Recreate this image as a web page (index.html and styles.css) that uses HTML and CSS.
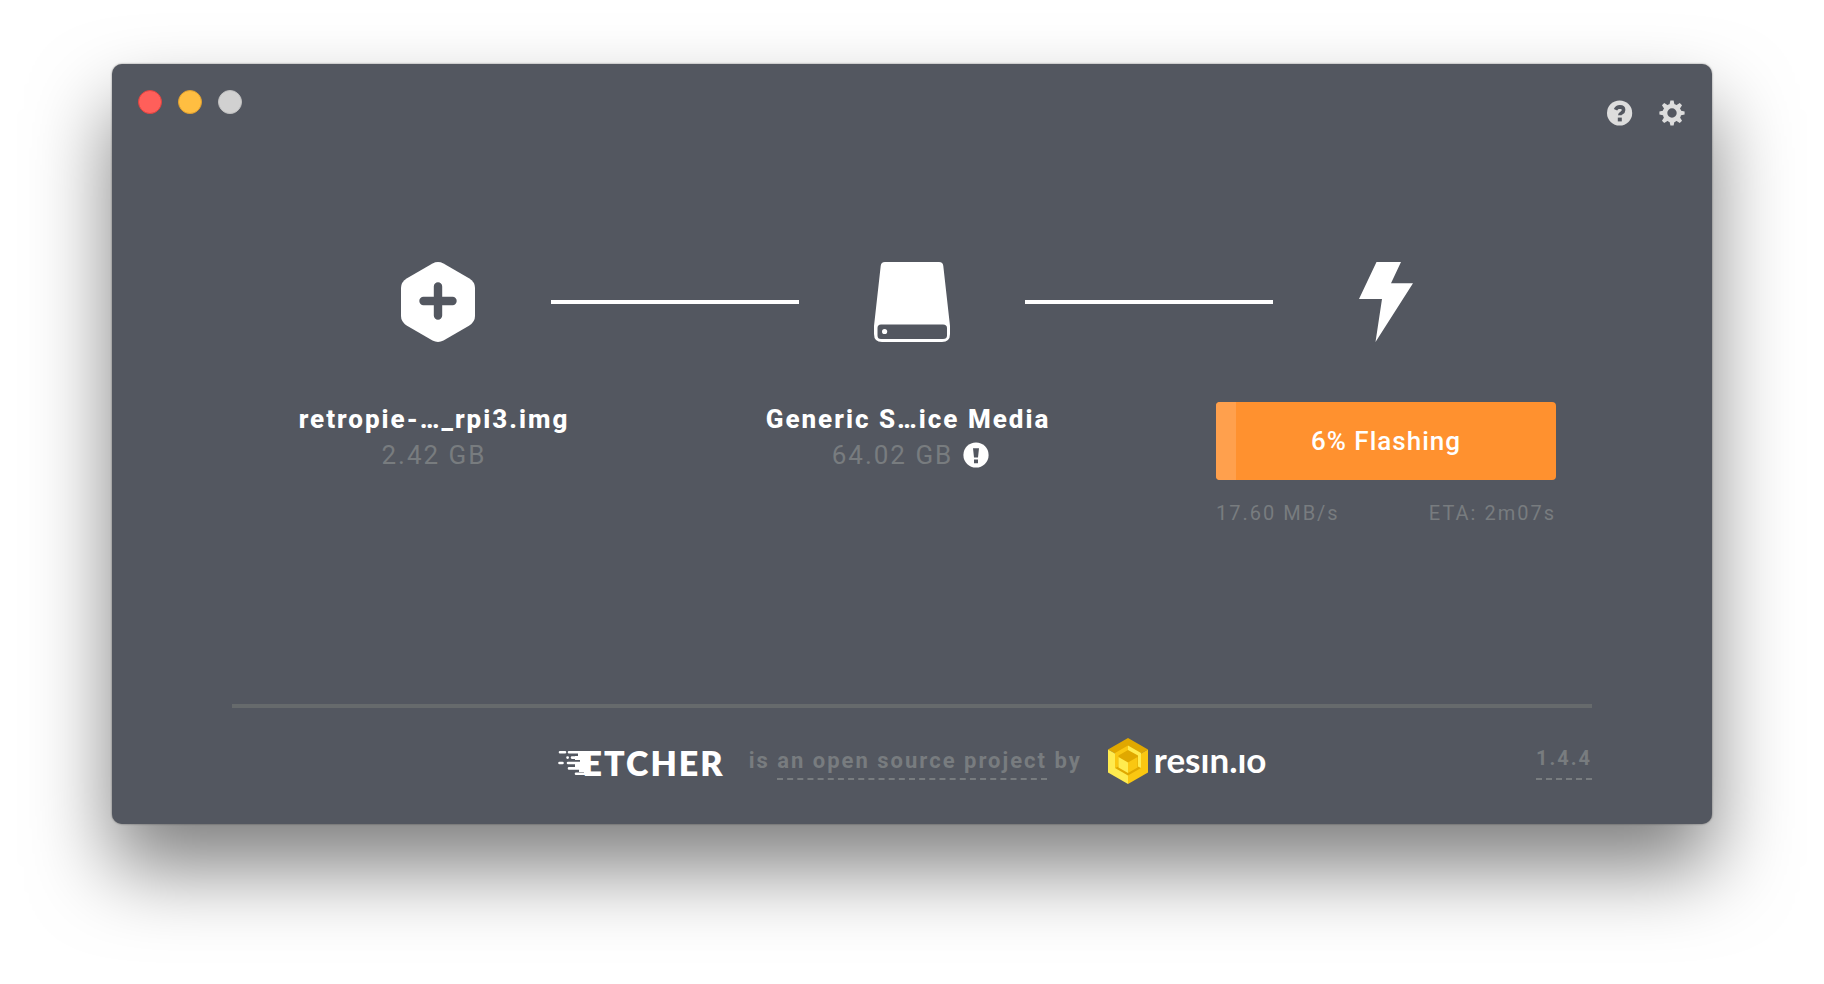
FILE: index.html
```
<!DOCTYPE html>
<html lang="en">
<head>
<meta charset="utf-8">
<title>Etcher</title>
<link rel="stylesheet" href="styles.css">
</head>
<body>
<div class="window">
  <header class="titlebar">
    <div class="lights">
      <button class="light light-close" aria-label="Close"></button>
      <button class="light light-minimize" aria-label="Minimize"></button>
      <button class="light light-zoom" aria-label="Zoom" disabled></button>
    </div>
    <nav class="tools">
      <button class="tool" aria-label="Help">
        <svg viewBox="0 0 26 26" width="26" height="26"><circle cx="12.600" cy="13" r="12.600" fill="#ddd"/><path d="M8.500 9.800Q9.800 6.900 12.800 6.900Q16.600 7 16.600 10Q16.600 11.800 14.500 13Q12.800 13.900 12.800 15.200" fill="none" stroke="#535760" stroke-width="3.600"/><path d="M10.800 17.600h4v3.800h-4z" fill="#535760"/></svg>
      </button>
      <button class="tool" aria-label="Settings">
        <svg viewBox="0 0 26 26" width="26" height="26"><g fill="#ddd"><path id="tooth" d="M10.400 5l1-4.600h3.200l1 4.600z"/><use href="#tooth" transform="rotate(45 13 13)"/><use href="#tooth" transform="rotate(90 13 13)"/><use href="#tooth" transform="rotate(135 13 13)"/><use href="#tooth" transform="rotate(180 13 13)"/><use href="#tooth" transform="rotate(225 13 13)"/><use href="#tooth" transform="rotate(270 13 13)"/><use href="#tooth" transform="rotate(315 13 13)"/></g><circle cx="13" cy="13" r="7" fill="none" stroke="#ddd" stroke-width="4.600"/></svg>
      </button>
    </nav>
  </header>

  <main class="main">
    <div class="track">
      <div class="track-icon">
        <svg viewBox="0 0 74 80" width="74" height="80"><path d="M31.5 1.5Q37-1.400 42.500 1.500L68 16.300Q74 20 74 26V54Q74 60 68 63.700L42.500 78.500Q37 81.400 31.500 78.500L6 63.700Q0 60 0 54V26Q0 20 6 16.300Z" fill="#fff"/><path d="M37 24.500v29M22.500 39h29" stroke="#535760" stroke-width="8.400" stroke-linecap="round"/></svg>
      </div>
      <div class="track-line"></div>
      <div class="track-icon">
        <svg viewBox="0 0 78 80" width="78" height="80"><path fill="#fff" fill-rule="evenodd" d="M12 0H66Q70 0 70.300 4L77 64V72Q77 80 69 80H9Q1 80 1 72V64L7.700 4Q8 0 12 0ZM8 62.500Q4.500 62.500 4.500 66V73.500Q4.500 77 8 77H70Q74 77 74 73.500V66Q74 62.500 70 62.500Z"/><circle cx="11.600" cy="69.500" r="2.600" fill="#fff"/></svg>
      </div>
      <div class="track-line"></div>
      <div class="track-icon">
        <svg viewBox="0 0 54 80" width="54" height="80"><path d="M17.500 0H42L32 21.300H54L16.500 80L23 37H0Z" fill="#fff"/></svg>
      </div>
    </div>

    <div class="steps">
      <section class="step step-text">
        <h2 class="step-name">retropie-…_rpi3.img</h2>
        <p class="step-size">2.42 GB</p>
      </section>
      <section class="step step-text">
        <h2 class="step-name">Generic S…ice Media</h2>
        <p class="step-size step-size-flagged">64.02 GB
          <svg class="alert" viewBox="0 0 26 26" width="26" height="26" role="img" aria-label="Warning"><circle cx="13" cy="13" r="12.600" fill="#fff"/><path d="M10 6.200h6l-1 9.200h-4zM11 17.400h4v3.800h-4z" fill="#535760"/></svg>
        </p>
      </section>
      <section class="step">
        <button class="flash"><span class="flash-bar" style="width:6%"></span><span class="flash-label">6% Flashing</span></button>
        <div class="stats"><span>17.60 MB/s</span><span>ETA: 2m07s</span></div>
      </section>
    </div>
  </main>

  <footer class="footer">
    <div class="credits">
      <a class="etcher" href="#" aria-label="Etcher"><svg class="streaks" viewBox="0 0 32 26" width="32" height="26"><g stroke="#fff" stroke-linecap="round" stroke-width="2.600"><path d="M2 2.300h5M11 2.300h19M9.500 7.600h.2M14 7.600h16M1.500 13h3M10 13h20M11 18.400h19M18 23.700h12"/></g><path d="M20 1h10v24H26v-3h-5v-5h-4v-3h5v-4h-5v-4h3z" fill="#fff"/></svg><span class="etcher-name">ETCHER</span></a>
      <span class="tagline">is <a class="underlined" href="#">an open source project</a> by</span>
      <a class="resin" href="#" aria-label="resin.io">
        <svg viewBox="0 0 40 46" width="40" height="46"><path d="M20 0L40 11.500L20 23L0 11.500Z" fill="#e0a800"/><path d="M0 11.500L20 23V46L0 34.500Z" fill="#ffeb4f"/><path d="M40 11.500L20 23V46L40 34.500Z" fill="#fac711"/><path d="M20 7.500L33 15V30L20 37.500L7 30V15Z" fill="#e0a800"/><path d="M7 15L20 7.500V12L10.500 17.500V28.500L7 30Z" fill="#fac711"/><path d="M20 7.500L33 15V30L30 28.500V17.500L20 12Z" fill="#ffeb4f"/><path d="M10.500 19L20 24.500V35L10.500 29.500Z" fill="#ffeb4f"/><path d="M29.500 19L20 24.500V35L29.500 29.500Z" fill="#fac711"/></svg>
        <span class="resin-name">resın.ıo</span>
      </a>
    </div>
    <a class="version underlined" href="#">1.4.4</a>
  </footer>
</div>
</body>
</html>
```
FILE: styles.css
```
* { box-sizing: border-box; }

body {
  margin: 0;
  min-height: 100vh;
  padding: 64px 112px 160px;
  display: flex;
  background: #fff;
  font-family: Roboto, "Liberation Sans", sans-serif;
  color: #fff;
}

h2, p { margin: 0; }
button { border: 0; padding: 0; font: inherit; color: inherit; }
a { color: inherit; text-decoration: none; }
svg { display: block; flex: none; }

.window {
  flex: 1;
  display: flex;
  flex-direction: column;
  border-radius: 10px;
  background: #535760;
  box-shadow: 0 0 2px rgba(0, 0, 0, .5), 0 44px 80px rgba(0, 0, 0, .5);
}

.titlebar {
  display: flex;
  justify-content: space-between;
  align-items: flex-start;
  padding: 26px 27px 0 26px;
}

.lights { display: flex; gap: 16px; }
.light { width: 24px; height: 24px; border-radius: 50%; }
.light-close { background: #ff5f5a; border: 1px solid #e1433f; }
.light-minimize { background: #ffbe41; border: 1px solid #e0a02f; }
.light-zoom { background: #d1d1d1; border: 1px solid #c0c0c0; }

.tools { display: flex; gap: 26px; padding-top: 10px; }
.tool { background: none; }

.main { flex: 1; padding-top: 136px; }

.track {
  display: flex;
  justify-content: center;
  align-items: center;
}
.track-icon { width: 226px; display: flex; justify-content: center; }
.track-line { width: 248px; height: 4px; background: #fff; }

.steps {
  display: grid;
  grid-template-columns: repeat(3, 340px);
  justify-content: center;
  gap: 134px;
  padding-top: 60px;
}
.step-text { text-align: center; padding-right: 8px; }
.step-name {
  font-size: 26px;
  line-height: 34px;
  font-weight: 800;
  letter-spacing: 2px;
  white-space: nowrap;
}
.step-size {
  display: flex;
  justify-content: center;
  align-items: center;
  gap: 10px;
  font-size: 26px;
  line-height: 38px;
  letter-spacing: 2px;
  color: #787c7f;
}
.step-size-flagged { padding-left: 5px; }

.flash {
  position: relative;
  display: block;
  width: 100%;
  height: 78px;
  border-radius: 4px;
  overflow: hidden;
  background: #ff912f;
}
.flash-bar { position: absolute; top: 0; bottom: 0; left: 0; background: #ffa04d; }
.flash-label {
  position: relative;
  font-size: 26px;
  font-weight: 500;
  letter-spacing: 1px;
}
.stats {
  display: flex;
  justify-content: space-between;
  padding-top: 21px;
  font-size: 20px;
  line-height: 24px;
  letter-spacing: 2px;
  color: #787c7f;
}

.footer {
  margin: 0 120px;
  height: 120px;
  border-top: 4px solid #666a6c;
  display: grid;
  grid-template-columns: 1fr auto 1fr;
  align-items: start;
  padding-top: 30px;
  font-size: 22px;
  line-height: 40px;
  font-weight: 700;
  color: #787c7f;
}
.credits {
  grid-column: 2;
  display: flex;
  align-items: center;
}
.underlined { border-bottom: 2px dashed #787c7f; }
.tagline {
  margin: 0 26px 0 24px;
  letter-spacing: 2px;
}
.tagline .underlined { padding-bottom: 5px; }
.version {
  justify-self: end;
  font-size: 20px;
  letter-spacing: 2px;
}

.etcher, .resin { display: flex; align-items: center; color: #fff; }
.etcher { padding-top: 3px; }
.etcher-name {
  font-family: Lato, sans-serif;
  font-size: 34px;
  letter-spacing: 2px;
  font-weight: 800;
}
.streaks { margin-right: -7px; }
.resin { gap: 6px; }
.resin-name {
  padding-bottom: 5px;
  font-family: Lato, sans-serif;
  font-size: 35px;
  font-weight: 700;
}
```
